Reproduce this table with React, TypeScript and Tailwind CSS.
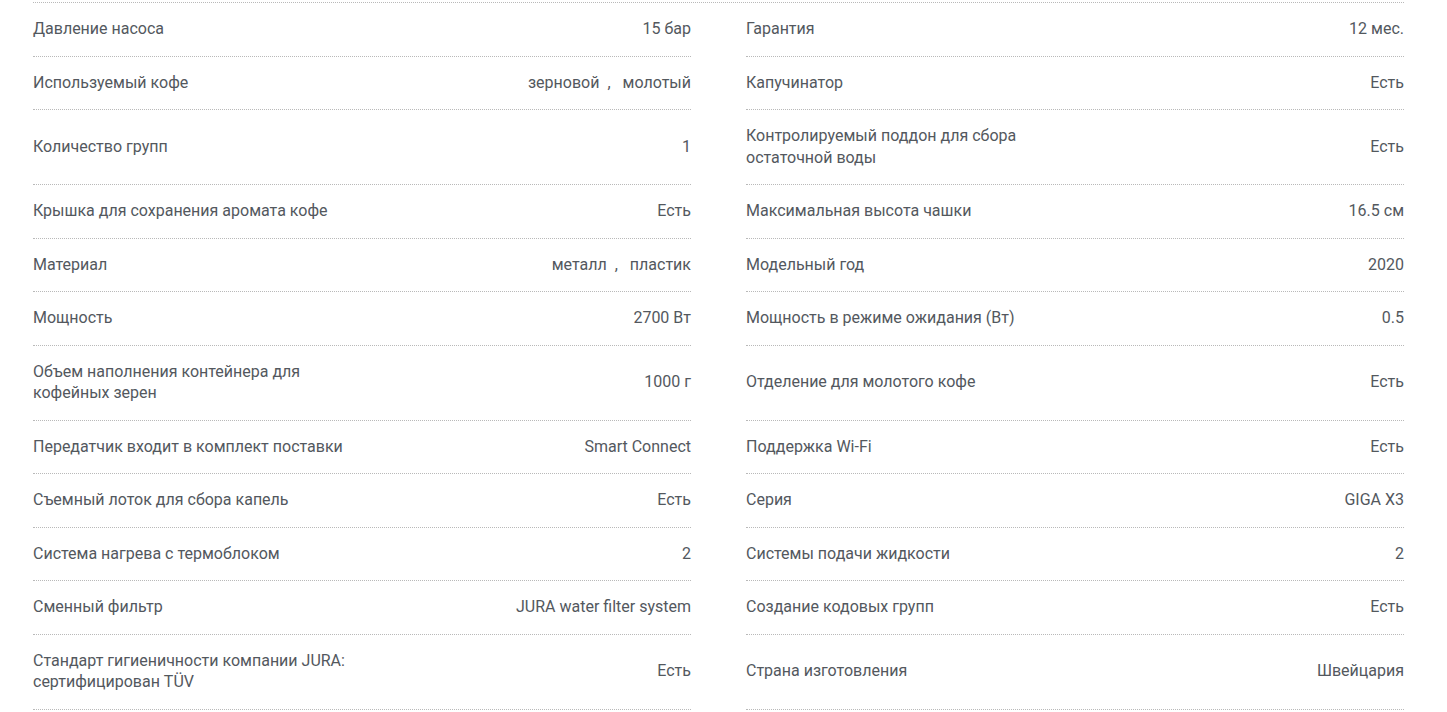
const specs: [string, string, string, string][] = [
  ["Давление насоса", "15 бар", "Гарантия", "12 мес."],
  ["Используемый кофе", "зерновой , молотый", "Капучинатор", "Есть"],
  ["Количество групп", "1", "Контролируемый поддон для сбора остаточной воды", "Есть"],
  ["Крышка для сохранения аромата кофе", "Есть", "Максимальная высота чашки", "16.5 см"],
  ["Материал", "металл , пластик", "Модельный год", "2020"],
  ["Мощность", "2700 Вт", "Мощность в режиме ожидания (Вт)", "0.5"],
  ["Объем наполнения контейнера для кофейных зерен", "1000 г", "Отделение для молотого кофе", "Есть"],
  ["Передатчик входит в комплект поставки", "Smart Connect", "Поддержка Wi-Fi", "Есть"],
  ["Съемный лоток для сбора капель", "Есть", "Серия", "GIGA X3"],
  ["Система нагрева с термоблоком", "2", "Системы подачи жидкости", "2"],
  ["Сменный фильтр", "JURA water filter system", "Создание кодовых групп", "Есть"],
  ["Стандарт гигиеничности компании JURA: сертифицирован TÜV", "Есть", "Страна изготовления", "Швейцария"],
];

const Value = ({ text }: { text: string }) => {
  const parts = text.split(" , ");
  return (
    <span>
      {parts.map((p, i) => (
        <span key={i}>
          {i > 0 && <span className="ml-[8px] mr-[12px]">,</span>}
          {p}
        </span>
      ))}
    </span>
  );
};

const Cell = ({ label, value }: { label: string; value: string }) => (
  <div className="flex items-center justify-between border-b border-dotted border-[#b9b9b9] pt-[15px] pb-[16px]">
    <span className="w-1/2 pr-2">{label}</span>
    <span className="text-right">
      <Value text={value} />
    </span>
  </div>
);

export default function App() {
  return (
    <div
      className="w-[1447px] h-[712px] overflow-hidden bg-white pl-[33px] pt-[2px] text-[16px] leading-[21.5px] text-[#53585e]"
      style={{ fontFamily: "Roboto, 'Liberation Sans', sans-serif" }}
    >
      <div className="grid w-[1371px] grid-cols-2 gap-x-[55px] border-t border-dotted border-[#b9b9b9]">
        {specs.map(([l1, v1, l2, v2], i) => (
          <div key={i} className="contents">
            <Cell label={l1} value={v1} />
            <Cell label={l2} value={v2} />
          </div>
        ))}
      </div>
    </div>
  );
}
